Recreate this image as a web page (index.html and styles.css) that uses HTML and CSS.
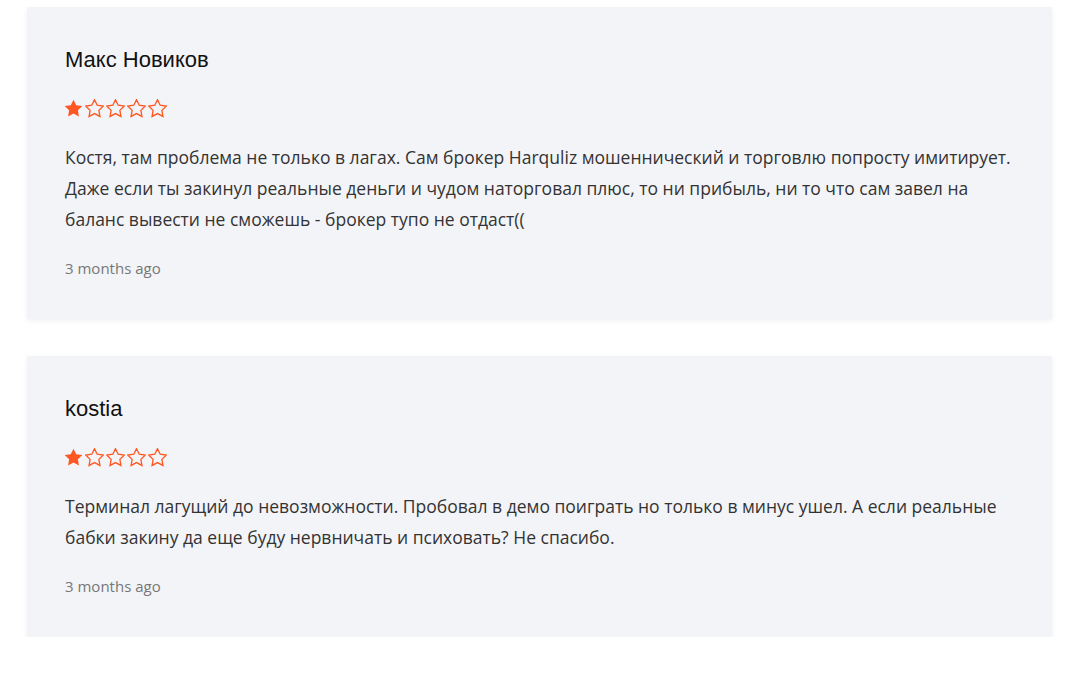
FILE: index.html
```html
<!DOCTYPE html>
<html lang="ru">
<head>
<meta charset="utf-8">
<link rel="stylesheet" href="styles.css">
</head>
<body>
<div class="list">
  <div class="review">
    <div class="name">Макс Новиков</div>
    <div class="stars">
      <svg class="star" viewBox="-0.8 -0.8 21.6 21.6"><path class="full" d="M10 0L13.09 6.26L20 7.26L14.99 12.13L16.18 19.02L10 15.76L3.82 19.02L5.01 12.13L0 7.26L6.91 6.26Z"/></svg>
      <svg class="star" viewBox="-0.8 -0.8 21.6 21.6"><path class="empty" d="M10 0L13.09 6.26L20 7.26L14.99 12.13L16.18 19.02L10 15.76L3.82 19.02L5.01 12.13L0 7.26L6.91 6.26Z"/></svg>
      <svg class="star" viewBox="-0.8 -0.8 21.6 21.6"><path class="empty" d="M10 0L13.09 6.26L20 7.26L14.99 12.13L16.18 19.02L10 15.76L3.82 19.02L5.01 12.13L0 7.26L6.91 6.26Z"/></svg>
      <svg class="star" viewBox="-0.8 -0.8 21.6 21.6"><path class="empty" d="M10 0L13.09 6.26L20 7.26L14.99 12.13L16.18 19.02L10 15.76L3.82 19.02L5.01 12.13L0 7.26L6.91 6.26Z"/></svg>
      <svg class="star" viewBox="-0.8 -0.8 21.6 21.6"><path class="empty" d="M10 0L13.09 6.26L20 7.26L14.99 12.13L16.18 19.02L10 15.76L3.82 19.02L5.01 12.13L0 7.26L6.91 6.26Z"/></svg>
    </div>
    <p class="text">Костя, там проблема не только в лагах. Сам брокер Harquliz мошеннический и торговлю попросту имитирует. Даже если ты закинул реальные деньги и чудом наторговал плюс, то ни прибыль, ни то что сам завел на баланс вывести не сможешь - брокер тупо не отдаст((</p>
    <div class="time">3 months ago</div>
  </div>
  <div class="review">
    <div class="name">kostia</div>
    <div class="stars">
      <svg class="star" viewBox="-0.8 -0.8 21.6 21.6"><path class="full" d="M10 0L13.09 6.26L20 7.26L14.99 12.13L16.18 19.02L10 15.76L3.82 19.02L5.01 12.13L0 7.26L6.91 6.26Z"/></svg>
      <svg class="star" viewBox="-0.8 -0.8 21.6 21.6"><path class="empty" d="M10 0L13.09 6.26L20 7.26L14.99 12.13L16.18 19.02L10 15.76L3.82 19.02L5.01 12.13L0 7.26L6.91 6.26Z"/></svg>
      <svg class="star" viewBox="-0.8 -0.8 21.6 21.6"><path class="empty" d="M10 0L13.09 6.26L20 7.26L14.99 12.13L16.18 19.02L10 15.76L3.82 19.02L5.01 12.13L0 7.26L6.91 6.26Z"/></svg>
      <svg class="star" viewBox="-0.8 -0.8 21.6 21.6"><path class="empty" d="M10 0L13.09 6.26L20 7.26L14.99 12.13L16.18 19.02L10 15.76L3.82 19.02L5.01 12.13L0 7.26L6.91 6.26Z"/></svg>
      <svg class="star" viewBox="-0.8 -0.8 21.6 21.6"><path class="empty" d="M10 0L13.09 6.26L20 7.26L14.99 12.13L16.18 19.02L10 15.76L3.82 19.02L5.01 12.13L0 7.26L6.91 6.26Z"/></svg>
    </div>
    <p class="text">Терминал лагущий до невозможности. Пробовал в демо поиграть но только в минус ушел. А если реальные бабки закину да еще буду нервничать и психовать? Не спасибо.</p>
    <div class="time">3 months ago</div>
  </div>
</div>
</body>
</html>
```
FILE: styles.css
```css
html, body {
  margin: 0;
  padding: 0;
  background: #ffffff;
}
.list {
  display: flex;
  flex-direction: column;
  gap: 37px;
  margin: 7px 17px 0 27px;
}
.review {
  background: #f3f4f8;
  padding: 41px 38px 41px 38px;
  box-shadow: 0 2px 6px rgba(0, 0, 0, 0.06);
}
.name {
  font-family: "Liberation Sans", Arial, sans-serif;
  font-size: 22px;
  line-height: 24px;
  color: #111;
}
.stars {
  display: flex;
  gap: 2px;
  margin-top: 27px;
  margin-left: -1px;
  height: 19px;
}
.star {
  flex: none;
  width: 19px;
  height: 19px;
}
.full {
  fill: #ff5722;
}
.empty {
  fill: none;
  stroke: #ff5722;
  stroke-width: 1.5;
  stroke-linejoin: miter;
}
.text {
  margin: 24px 0 0 0;
  font-family: "Open Sans", sans-serif;
  font-size: 17.5px;
  line-height: 31px;
  color: #333;
}
.time {
  margin-top: 23px;
  font-family: "Open Sans", sans-serif;
  font-size: 15px;
  line-height: 20px;
  color: #777;
}
```
